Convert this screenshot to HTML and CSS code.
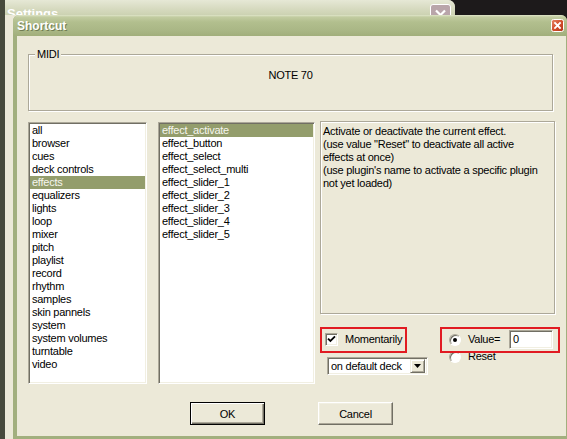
FILE: index.html
```html
<!DOCTYPE html>
<html>
<head>
<meta charset="utf-8">
<title>Shortcut</title>
<link rel="stylesheet" href="styles.css">
</head>
<body>
<div class="settings-win">
  <div class="settings-title">
    <span class="settings-text">Settings</span>
    <span class="chev"><svg width="19" height="19" viewBox="0 0 19 19"><path d="M5 5.5 L9.5 10 L14 5.5" fill="none" stroke="#fff" stroke-width="2.2"/></svg></span>
  </div>
</div>
<div class="dialog">
  <div class="titlebar">
    <span class="title">Shortcut</span>
    <span class="close"><svg width="13" height="13" viewBox="0 0 13 13"><defs><linearGradient id="cg" x1="0" y1="0" x2="1" y2="1"><stop offset="0" stop-color="#e8896a"/><stop offset="0.5" stop-color="#d24f2c"/><stop offset="1" stop-color="#b5361a"/></linearGradient></defs><rect x="0.5" y="0.5" width="12" height="12" rx="2" fill="url(#cg)" stroke="#fff"/><path d="M4 4 L9 9 M9 4 L4 9" stroke="#fff" stroke-width="1.8" stroke-linecap="square"/></svg></span>
  </div>
  <div class="client">
    <div class="group">
      <span class="legend">MIDI</span>
      <div class="note">NOTE 70</div>
    </div>
    <div class="main">
      <ul class="list cats">
        <li>all</li>
        <li>browser</li>
        <li>cues</li>
        <li>deck controls</li>
        <li class="sel">effects</li>
        <li>equalizers</li>
        <li>lights</li>
        <li>loop</li>
        <li>mixer</li>
        <li>pitch</li>
        <li>playlist</li>
        <li>record</li>
        <li>rhythm</li>
        <li>samples</li>
        <li>skin pannels</li>
        <li>system</li>
        <li>system volumes</li>
        <li>turntable</li>
        <li>video</li>
      </ul>
      <ul class="list actions">
        <li class="sel">effect_activate</li>
        <li>effect_button</li>
        <li>effect_select</li>
        <li>effect_select_multi</li>
        <li>effect_slider_1</li>
        <li>effect_slider_2</li>
        <li>effect_slider_3</li>
        <li>effect_slider_4</li>
        <li>effect_slider_5</li>
      </ul>
      <div class="side">
        <div class="desc">Activate or deactivate the current effect.<br>(use value &quot;Reset&quot; to deactivate all active<br>effects at once)<br>(use plugin's name to activate a specific plugin<br>not yet loaded)</div>
        <div class="opts">
          <div class="opt-left">
            <div class="check-row">
              <span class="checkbox"><svg width="9" height="9" viewBox="0 0 9 9"><path d="M1 3.6 L3.4 6 L8 1.4" fill="none" stroke="#000" stroke-width="1.8"/></svg></span>
              <span>Momentarily</span>
            </div>
            <div class="combo">
              <span class="combo-text">on default deck</span>
              <span class="combo-btn"><svg width="7" height="4" viewBox="0 0 7 4"><path d="M0 0 H7 L3.5 4 Z" fill="#000"/></svg></span>
            </div>
          </div>
          <div class="opt-right">
            <div class="radio-row value-row">
              <span class="radio on"></span>
              <span class="rlabel">Value=</span>
              <span class="field">0</span>
            </div>
            <div class="radio-row reset-row">
              <span class="radio"></span>
              <span class="rlabel">Reset</span>
            </div>
          </div>
          <span class="annot a1"></span>
          <span class="annot a2"></span>
        </div>
      </div>
    </div>
    <div class="buttons">
      <button class="btn default">OK</button>
      <button class="btn">Cancel</button>
    </div>
  </div>
</div>
</body>
</html>
```

FILE: styles.css
```css
* { box-sizing: border-box; }
html, body { margin: 0; padding: 0; }
body {
  position: relative;
  width: 567px;
  height: 439px;
  overflow: hidden;
  background: #1d1a1b;
  font-family: "Liberation Sans", Arial, sans-serif;
  font-size: 11px;
  letter-spacing: -0.25px;
  color: #000;
}

/* background Settings window */
.settings-win {
  position: absolute;
  left: 0;
  top: 0;
  width: 455px;
  height: 439px;
  background: #ece9d8;
  border-left: 5px solid #474a3c;
  border-radius: 0 7px 0 0;
  overflow: hidden;
}
.settings-title {
  height: 15px;
  overflow: hidden;
  display: flex;
  align-items: flex-start;
  padding: 4px 4px 0 2px;
  background: linear-gradient(#e6e8d6, #d6dabf 60%, #ccd2b2);
}
.settings-text {
  color: #fff;
  font-weight: bold;
  font-size: 13px;
  line-height: 16px;
  margin-top: 2px;
  letter-spacing: 0;
}
.chev {
  margin-left: auto;
  width: 21px;
  height: 21px;
  flex: none;
  border: 1px solid #fff;
  border-radius: 3px;
  background: #b9a5aa;
  display: flex;
}

/* dialog */
.dialog {
  position: absolute;
  left: 13px;
  top: 15px;
  width: 554px;
  height: 424px;
  display: flex;
  flex-direction: column;
  border-radius: 6px 6px 0 0;
  overflow: hidden;
  background: #a2af7e;
}
.titlebar {
  height: 21px;
  flex: none;
  display: flex;
  align-items: center;
  padding: 0 3px 0 4px;
  background: linear-gradient(#dfe5c9 0, #c2cca1 2px, #b2bf8e 7px, #aab786 15px, #a1ae7b 21px);
}
.title {
  color: #fff;
  font-weight: bold;
  font-size: 12px;
  letter-spacing: 0;
  text-shadow: 1px 1px 0 #6f7c52;
}
.close { margin-left: auto; width: 13px; height: 13px; display: flex; }

.client {
  flex: 1;
  margin: 0 1px 3px 4px;
  background: #ece9d8;
}

.group {
  margin: 18px 13px 0 11px;
  height: 57px;
  border: 1px solid #aca899;
  box-shadow: inset 1px 1px 0 #fff, 1px 1px 0 #fff;
}
.legend {
  display: block;
  width: max-content;
  margin: -7px 0 0 6px;
  padding: 0 2px;
  background: #ece9d8;
  line-height: 13px;
}
.note {
  text-align: center;
  margin-top: 8px;
  line-height: 13px;
}

.main {
  display: flex;
  align-items: flex-start;
  margin-top: 10px;
  height: 263px;
}
.list {
  list-style: none;
  margin: 1px 0 0 0;
  padding: 1px;
  height: 262px;
  overflow: hidden;
  background: #fff;
  border: 1px solid;
  border-color: #aca899 #fff #fff #aca899;
  box-shadow: inset 1px 1px 0 #716f64, inset -1px -1px 0 #f1efe2;
}
.list li {
  height: 13px;
  line-height: 13px;
  padding-left: 2px;
  white-space: nowrap;
}
.list li.sel { background: #939d6c; color: #f6f6ee; }
.cats { margin-left: 11px; width: 119px; }
.actions { margin-left: 11px; width: 157px; }

.side { margin-left: 5px; width: 235px; }
.desc {
  height: 193px;
  padding: 3px 2px;
  line-height: 13px;
  white-space: nowrap;
  border: 1px solid #aca899;
  box-shadow: inset 1px 1px 0 #fff, 1px 1px 0 #fff;
}

.opts { position: relative; height: 70px; display: flex; }
.opt-left { width: 120px; padding-left: 5px; }
.check-row {
  display: flex;
  align-items: center;
  gap: 7px;
  margin-top: 19px;
  height: 13px;
  line-height: 13px;
}
.checkbox, .combo, .field {
  background: #fff;
  border: 1px solid;
  border-color: #aca899 #fff #fff #aca899;
  box-shadow: inset 1px 1px 0 #716f64, inset -1px -1px 0 #f1efe2;
}
.checkbox {
  width: 13px;
  height: 13px;
  flex: none;
  display: flex;
  align-items: center;
  justify-content: center;
}
.combo {
  margin: 11px 0 0 2px;
  width: 101px;
  height: 18px;
  display: flex;
  align-items: center;
  padding: 1px 2px 1px 2px;
}
.combo-text { flex: 1; padding-left: 1px; line-height: 13px; }
.combo-btn {
  width: 15px;
  height: 14px;
  flex: none;
  display: flex;
  align-items: center;
  justify-content: center;
  background: #ece9d8;
  border: 1px solid;
  border-color: #f1efe2 #716f64 #716f64 #f1efe2;
  box-shadow: inset 1px 1px 0 #fff, inset -1px -1px 0 #aca899;
}

.opt-right { padding-left: 9px; }
.radio-row { display: flex; align-items: center; line-height: 13px; }
.value-row { margin-top: 16px; height: 19px; }
.reset-row { margin-top: 1px; height: 13px; }
.radio {
  width: 12px;
  height: 12px;
  flex: none;
  border-radius: 50%;
  background: #fff;
  border: 1px solid;
  border-color: #aca899 #fff #fff #aca899;
  box-shadow: inset 1px 1px 0 #716f64;
  display: flex;
  align-items: center;
  justify-content: center;
}
.radio.on::after {
  content: "";
  width: 4px;
  height: 4px;
  border-radius: 50%;
  background: #000;
}
.rlabel { margin-left: 7px; }
.value-row .rlabel { width: 41px; }
.field {
  width: 44px;
  height: 19px;
  padding: 2px 3px;
  line-height: 13px;
}

.annot {
  position: absolute;
  top: 13px;
  height: 26px;
  border: 2px solid #e11b22;
}
.a1 { left: 0; width: 87px; }
.a2 { left: 120px; width: 120px; }

.buttons {
  display: flex;
  margin-top: 18px;
  padding-left: 173px;
}
.btn {
  width: 75px;
  height: 23px;
  padding: 0;
  font: inherit;
  letter-spacing: inherit;
  color: #000;
  background: #ece9d8;
  border: 1px solid;
  border-color: #fff #716f64 #716f64 #fff;
  box-shadow: inset -1px -1px 0 #aca899, inset 1px 1px 0 #f1efe2;
  border-radius: 0;
}
.btn.default {
  border: 1px solid #000;
  box-shadow: inset 1px 1px 0 #fff, inset -1px -1px 0 #716f64, inset -2px -2px 0 #aca899;
}
.btn + .btn { margin-left: 53px; }
```
